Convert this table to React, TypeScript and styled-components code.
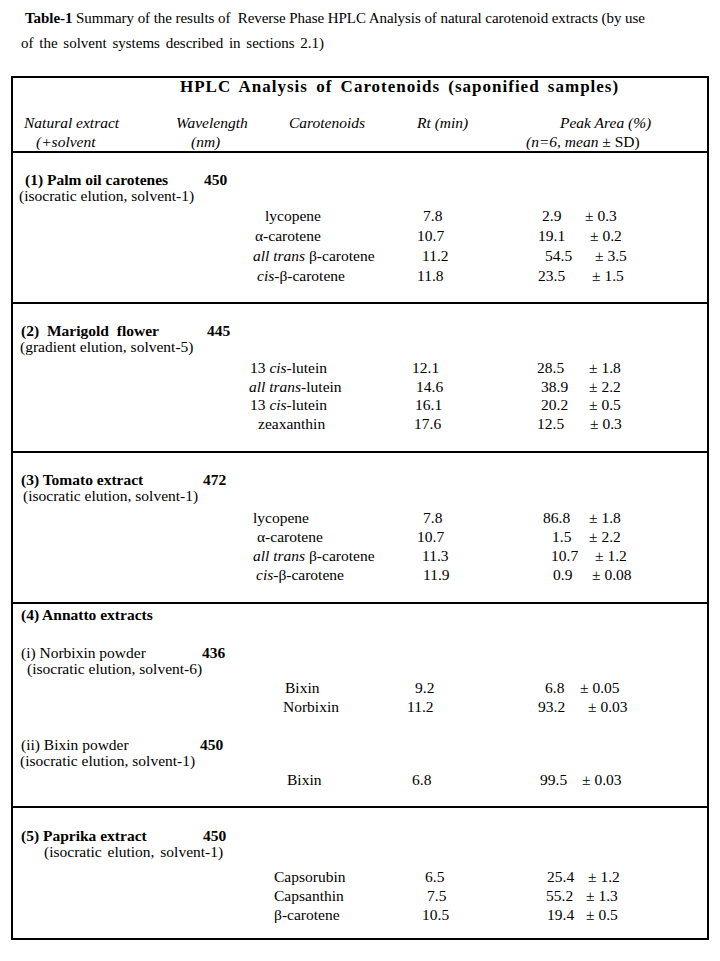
import React from 'react';
import styled, { createGlobalStyle } from 'styled-components';

const GlobalStyle = createGlobalStyle`
  html, body { margin: 0; padding: 0; background: #ffffff; }
  body {
    font-family: "Liberation Serif", "Times New Roman", Times, serif;
    color: #000;
  }
`;

const Page = styled.main`
  width: 720px;
  min-height: 961px;
  box-sizing: border-box;
  padding-top: 6px;
`;

const Caption = styled.div`
  font-size: 15px;
  line-height: 25px;
`;

const CaptionLine = styled.p<{ $pad: number; $ls?: number; $ws?: number }>`
  margin: 0;
  padding-left: ${p => p.$pad}px;
  letter-spacing: ${p => p.$ls ?? 0}px;
  word-spacing: ${p => p.$ws ?? 0}px;
  white-space: nowrap;
`;

const Table = styled.section`
  margin: 20px 0 0 11px;
  width: 698px;
  box-sizing: border-box;
  border: 2px solid #000;
  font-size: 15.5px;
`;

const Head = styled.header`
  border-bottom: 2px solid #000;
`;

const HeadTitle = styled.h2`
  margin: 0;
  padding-left: 167px;
  font-size: 17px;
  line-height: 18px;
  font-weight: bold;
  letter-spacing: 1px;
  word-spacing: 3px;
  white-space: nowrap;
`;

const ColHeads = styled.div`
  margin-top: 17px;
  display: grid;
  grid-template-columns: 147px 120px 120px 125px 1fr;
  font-style: italic;
  line-height: 19px;
`;

const HeadCell = styled.div`
  display: flex;
  flex-direction: column;
`;

const Ln = styled.span<{ $pad?: number; $ws?: number }>`
  display: block;
  padding-left: ${p => p.$pad ?? 0}px;
  word-spacing: ${p => p.$ws ?? 0}px;
  white-space: nowrap;
`;

const Upright = styled.span`
  font-style: normal;
`;

const Section = styled.div<{ $pt: number; $pb: number }>`
  padding: ${p => p.$pt}px 0 ${p => p.$pb}px;
  & + & {
    border-top: 2px solid #000;
  }
`;

const NameRow = styled.div<{ $mt?: number }>`
  display: grid;
  grid-template-columns: 187px 1fr;
  line-height: 16px;
  margin-top: ${p => p.$mt ?? 0}px;
`;

const Name = styled.span<{ $pad: number; $bold?: boolean; $ws?: number }>`
  padding-left: ${p => p.$pad}px;
  font-weight: ${p => (p.$bold ? 'bold' : 'normal')};
  word-spacing: ${p => p.$ws ?? 0}px;
  white-space: nowrap;
`;

const Wave = styled.b<{ $pad: number }>`
  padding-left: ${p => p.$pad}px;
  white-space: nowrap;
`;

const GroupTitle = styled.div`
  font-weight: bold;
  line-height: 16px;
  padding-left: 8px;
`;

const Sub = styled.div<{ $pad: number; $ws?: number }>`
  line-height: 16px;
  padding-left: ${p => p.$pad}px;
  word-spacing: ${p => p.$ws ?? 0}px;
  white-space: nowrap;
`;

const Data = styled.div<{ $mt: number; $lh: number }>`
  margin-top: ${p => p.$mt}px;
  line-height: ${p => p.$lh}px;
`;

const DataRow = styled.div`
  display: grid;
  grid-template-columns: 227px 160px 125px 50px 1fr;
`;

const Cell = styled.span<{ $pad: number }>`
  padding-left: ${p => p.$pad}px;
  white-space: nowrap;
`;

type Row = {
  name: React.ReactNode;
  np: number;
  rt: string;
  rp: number;
  pk: string;
  pp: number;
  sd: string;
  sp: number;
};

const r = (
  name: React.ReactNode,
  np: number,
  rt: string,
  rp: number,
  pk: string,
  pp: number,
  sd: string,
  sp: number
): Row => ({ name, np, rt, rp, pk, pp, sd, sp });

const Rows: React.FC<{ rows: Row[]; mt: number; lh: number }> = ({ rows, mt, lh }) => (
  <Data $mt={mt} $lh={lh}>
    {rows.map((row, i) => (
      <DataRow key={i}>
        <span />
        <Cell $pad={row.np}>{row.name}</Cell>
        <Cell $pad={row.rp}>{row.rt}</Cell>
        <Cell $pad={row.pp}>{row.pk}</Cell>
        <Cell $pad={row.sp}>{row.sd}</Cell>
      </DataRow>
    ))}
  </Data>
);

const palm: Row[] = [
  r('lycopene', 25, '7.8', 23, '2.9', 17, '± 0.3', 10),
  r('α-carotene', 15, '10.7', 17, '19.1', 13, '± 0.2', 15),
  r(<><i>all trans</i> β-carotene</>, 13, '11.2', 22, '54.5', 20, '± 3.5', 20),
  r(<><i>cis</i>-β-carotene</>, 17, '11.8', 17, '23.5', 13, '± 1.5', 17),
];

const marigold: Row[] = [
  r(<>13 <i>cis</i>-lutein</>, 10, '12.1', 12, '28.5', 12, '± 1.8', 14),
  r(<><i>all trans</i>-lutein</>, 9, '14.6', 16, '38.9', 16, '± 2.2', 14),
  r(<>13 <i>cis</i>-lutein</>, 10, '16.1', 15, '20.2', 16, '± 0.5', 14),
  r('zeaxanthin', 18, '17.6', 14, '12.5', 12, '± 0.3', 15),
];

const tomato: Row[] = [
  r('lycopene', 13, '7.8', 23, '86.8', 18, '± 1.8', 14),
  r('α-carotene', 17, '10.7', 17, '1.5', 27, '± 2.2', 14),
  r(<><i>all trans</i> β-carotene</>, 13, '11.3', 22, '10.7', 26, '± 1.2', 20),
  r(<><i>cis</i>-β-carotene</>, 16, '11.9', 23, '0.9', 28, '± 0.08', 17),
];

const norbixin: Row[] = [
  r('Bixin', 45, '9.2', 15, '6.8', 20, '± 0.05', 5),
  r('Norbixin', 43, '11.2', 7, '93.2', 13, '± 0.03', 13),
];

const bixin: Row[] = [r('Bixin', 47, '6.8', 12, '99.5', 15, '± 0.03', 7)];

const paprika: Row[] = [
  r('Capsorubin', 34, '6.5', 25, '25.4', 22, '± 1.2', 13),
  r('Capsanthin', 34, '7.5', 27, '55.2', 21, '± 1.3', 11),
  r('β-carotene', 34, '10.5', 22, '19.4', 22, '± 0.5', 11),
];

export default function App() {
  return (
    <>
      <GlobalStyle />
      <Page>
        <Caption>
          <CaptionLine $pad={25} $ls={-0.06}>
            <b>Table-1</b> Summary of the results of&nbsp; Reverse Phase HPLC Analysis of natural carotenoid extracts (by use
          </CaptionLine>
          <CaptionLine $pad={21} $ws={2}>
            of the solvent systems described in sections 2.1)
          </CaptionLine>
        </Caption>

        <Table>
          <Head>
            <HeadTitle>HPLC Analysis of Carotenoids (saponified samples)</HeadTitle>
            <ColHeads>
              <HeadCell>
                <Ln $pad={11}>Natural extract</Ln>
                <Ln $pad={23}>(+solvent</Ln>
              </HeadCell>
              <HeadCell>
                <Ln $pad={16}>Wavelength</Ln>
                <Ln $pad={31}>(nm)</Ln>
              </HeadCell>
              <HeadCell>
                <Ln $pad={9}>Carotenoids</Ln>
              </HeadCell>
              <HeadCell>
                <Ln $pad={17}>Rt (min)</Ln>
              </HeadCell>
              <HeadCell>
                <Ln $pad={35}>Peak Area (%)</Ln>
                <Ln $pad={1}>
                  (n=6, mean <Upright>± SD)</Upright>
                </Ln>
              </HeadCell>
            </ColHeads>
          </Head>

          <Section $pt={19} $pb={16}>
            <NameRow>
              <Name $pad={12} $bold>(1) Palm oil carotenes</Name>
              <Wave $pad={4}>450</Wave>
            </NameRow>
            <Sub $pad={6}>(isocratic elution, solvent-1)</Sub>
            <Rows rows={palm} mt={2} lh={20} />
          </Section>

          <Section $pt={19} $pb={18}>
            <NameRow>
              <Name $pad={8} $bold $ws={4}>(2) Marigold flower</Name>
              <Wave $pad={7}>445</Wave>
            </NameRow>
            <Sub $pad={7}>(gradient elution, solvent-5)</Sub>
            <Rows rows={marigold} mt={4} lh={18.5} />
          </Section>

          <Section $pt={19} $pb={18}>
            <NameRow>
              <Name $pad={8} $bold>(3) Tomato extract</Name>
              <Wave $pad={3}>472</Wave>
            </NameRow>
            <Sub $pad={10}>(isocratic elution, solvent-1)</Sub>
            <Rows rows={tomato} mt={4} lh={19} />
          </Section>

          <Section $pt={3} $pb={17}>
            <GroupTitle>(4) Annatto extracts</GroupTitle>
            <NameRow $mt={22}>
              <Name $pad={8}>(i) Norbixin powder</Name>
              <Wave $pad={2}>436</Wave>
            </NameRow>
            <Sub $pad={14}>(isocratic elution, solvent-6)</Sub>
            <Rows rows={norbixin} mt={1} lh={19} />
            <NameRow $mt={21}>
              <Name $pad={8}>(ii) Bixin powder</Name>
              <Wave $pad={0}>450</Wave>
            </NameRow>
            <Sub $pad={7}>(isocratic elution, solvent-1)</Sub>
            <Rows rows={bixin} mt={1} lh={19} />
          </Section>

          <Section $pt={20} $pb={14}>
            <NameRow>
              <Name $pad={8} $bold>(5) Paprika extract</Name>
              <Wave $pad={3}>450</Wave>
            </NameRow>
            <Sub $pad={31} $ws={2}>(isocratic elution, solvent-1)</Sub>
            <Rows rows={paprika} mt={7} lh={19} />
          </Section>
        </Table>
      </Page>
    </>
  );
}
